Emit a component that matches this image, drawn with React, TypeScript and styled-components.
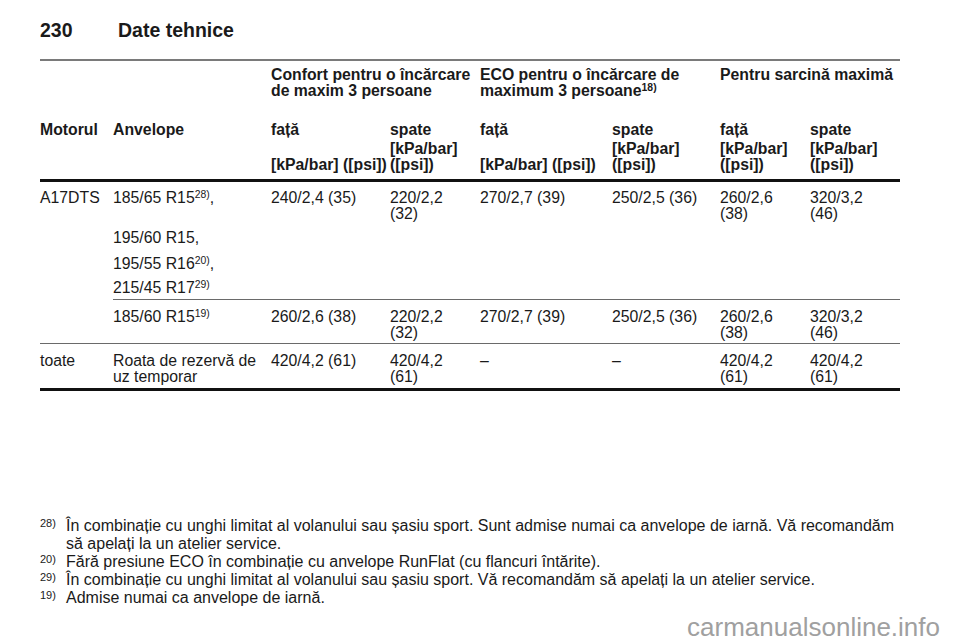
import React from 'react'
import styled, { createGlobalStyle } from 'styled-components'

const GlobalStyle = createGlobalStyle`
  html, body {
    margin: 0;
    padding: 0;
    background: #fff;
  }
  body {
    font-family: "Liberation Sans", Arial, sans-serif;
    color: #1a1a1a;
  }
`

const Page = styled.div`
  width: 960px;
  height: 642px;
  position: relative;
  overflow: hidden;
  display: flex;
  flex-direction: column;
  padding: 0 60px 0 40px;
  box-sizing: border-box;
`

const Header = styled.header`
  display: flex;
  align-items: baseline;
  padding-top: 19px;
  height: 61px;
  border-bottom: 2px solid #7a7a7a;
  box-sizing: border-box;
  font-size: 19.5px;
  font-weight: 700;
`

const PageNo = styled.span`
  width: 78px;
`

const Table = styled.table`
  width: 860px;
  border-collapse: collapse;
  table-layout: fixed;
  font-size: 15.8px;
  line-height: 16px;
`

const HeadCell = styled.th<{ $pt?: number; $pb?: number; $bottom?: boolean; $nowrap?: boolean }>`
  text-align: left;
  vertical-align: ${({ $bottom }) => ($bottom ? 'bottom' : 'top')};
  font-weight: 700;
  white-space: ${({ $nowrap }) => ($nowrap ? 'nowrap' : 'normal')};
  padding: ${({ $pt = 0 }) => $pt}px 6px ${({ $pb = 0 }) => $pb}px 0;
`

const UnitsRow = styled.tr`
  border-bottom: 3px solid #111;
`

const Cell = styled.td<{ $pt?: number; $pb?: number }>`
  vertical-align: top;
  padding: ${({ $pt = 0 }) => $pt}px 6px ${({ $pb = 0 }) => $pb}px 0;
`

const Row = styled.tr<{ $rule: 'thin' | 'thick' }>`
  border-bottom: ${({ $rule }) => ($rule === 'thick' ? '3px solid #111' : '1.5px solid #6a6a6a')};
`

const SubRow = styled.tr``

const TyreCell = styled.td<{ $pt?: number; $pb?: number }>`
  vertical-align: top;
  padding: ${({ $pt = 0 }) => $pt}px 6px ${({ $pb = 0 }) => $pb}px 0;
  border-bottom: 1.5px solid #6a6a6a;
`

const TyreLine = styled.div<{ $gap: number }>`
  margin-bottom: ${({ $gap }) => $gap}px;
`

const Sup = styled.sup`
  font-size: 0.66em;
  line-height: 0;
  vertical-align: 0.45em;
`

const Notes = styled.div`
  margin-top: auto;
  margin-bottom: 35px;
  font-size: 16px;
  line-height: 18px;
  display: flex;
  flex-direction: column;
`

const Note = styled.div`
  display: grid;
  grid-template-columns: 26px 1fr;
`

const NoteMark = styled.span`
  font-size: 11px;
  line-height: 12px;
`

const Watermark = styled.div`
  position: absolute;
  right: 20px;
  bottom: 0;
  font-size: 26px;
  line-height: 30px;
  color: #a0a0a0;
`

const notes = [
  {
    id: '28)',
    text: 'În combinație cu unghi limitat al volanului sau șasiu sport. Sunt admise numai ca anvelope de iarnă. Vă recomandăm să apelați la un atelier service.',
  },
  { id: '20)', text: 'Fără presiune ECO în combinație cu anvelope RunFlat (cu flancuri întărite).' },
  { id: '29)', text: 'În combinație cu unghi limitat al volanului sau șasiu sport. Vă recomandăm să apelați la un atelier service.' },
  { id: '19)', text: 'Admise numai ca anvelope de iarnă.' },
]

const units = [true, false, true, false, false, false]

export default function App() {
  return (
    <>
      <GlobalStyle />
      <Page>
        <Header>
          <PageNo>230</PageNo>
          <span>Date tehnice</span>
        </Header>
        <Table>
          <colgroup>
            <col style={{ width: 73 }} />
            <col style={{ width: 158 }} />
            <col style={{ width: 119 }} />
            <col style={{ width: 90 }} />
            <col style={{ width: 132 }} />
            <col style={{ width: 108 }} />
            <col style={{ width: 90 }} />
            <col style={{ width: 90 }} />
          </colgroup>
          <thead>
            <tr>
              <HeadCell $pt={6} />
              <HeadCell $pt={6} />
              <HeadCell $pt={6} colSpan={2}>
                Confort pentru o încărcare de maxim 3 persoane
              </HeadCell>
              <HeadCell $pt={6} colSpan={2}>
                ECO pentru o încărcare de maximum 3 persoane<Sup>18)</Sup>
              </HeadCell>
              <HeadCell $pt={6} colSpan={2}>
                Pentru sarcină maximă
              </HeadCell>
            </tr>
            <tr>
              <HeadCell $pt={23}>Motorul</HeadCell>
              <HeadCell $pt={23}>Anvelope</HeadCell>
              <HeadCell $pt={23}>față</HeadCell>
              <HeadCell $pt={23}>spate</HeadCell>
              <HeadCell $pt={23}>față</HeadCell>
              <HeadCell $pt={23}>spate</HeadCell>
              <HeadCell $pt={23}>față</HeadCell>
              <HeadCell $pt={23}>spate</HeadCell>
            </tr>
            <UnitsRow>
              <HeadCell $pt={3} $pb={6} />
              <HeadCell $pt={3} $pb={6} />
              {units.map((oneLine, i) => (
                <HeadCell key={i} $pt={3} $pb={6} $bottom $nowrap={oneLine}>
                  [kPa/bar] ([psi])
                </HeadCell>
              ))}
            </UnitsRow>
          </thead>
          <tbody>
            <SubRow>
              <Cell $pt={8} rowSpan={2}>
                A17DTS
              </Cell>
              <TyreCell $pt={8} $pb={3}>
                <TyreLine $gap={24}>
                  185/65 R15<Sup>28)</Sup>,
                </TyreLine>
                <TyreLine $gap={10}>195/60 R15,</TyreLine>
                <TyreLine $gap={8}>
                  195/55 R16<Sup>20)</Sup>,
                </TyreLine>
                <TyreLine $gap={0}>
                  215/45 R17<Sup>29)</Sup>
                </TyreLine>
              </TyreCell>
              <TyreCell $pt={8}>240/2,4 (35)</TyreCell>
              <TyreCell $pt={8}>220/2,2 (32)</TyreCell>
              <TyreCell $pt={8}>270/2,7 (39)</TyreCell>
              <TyreCell $pt={8}>250/2,5 (36)</TyreCell>
              <TyreCell $pt={8}>260/2,6 (38)</TyreCell>
              <TyreCell $pt={8}>320/3,2 (46)</TyreCell>
            </SubRow>
            <Row $rule="thin">
              <Cell $pt={9} $pb={2}>
                185/60 R15<Sup>19)</Sup>
              </Cell>
              <Cell $pt={9} $pb={2}>260/2,6 (38)</Cell>
              <Cell $pt={9} $pb={2}>220/2,2 (32)</Cell>
              <Cell $pt={9} $pb={2}>270/2,7 (39)</Cell>
              <Cell $pt={9} $pb={2}>250/2,5 (36)</Cell>
              <Cell $pt={9} $pb={2}>260/2,6 (38)</Cell>
              <Cell $pt={9} $pb={2}>320/3,2 (46)</Cell>
            </Row>
            <Row $rule="thick">
              <Cell $pt={9} $pb={3}>toate</Cell>
              <Cell $pt={9} $pb={3}>Roata de rezervă de uz temporar</Cell>
              <Cell $pt={9} $pb={3}>420/4,2 (61)</Cell>
              <Cell $pt={9} $pb={3}>420/4,2 (61)</Cell>
              <Cell $pt={9} $pb={3}>–</Cell>
              <Cell $pt={9} $pb={3}>–</Cell>
              <Cell $pt={9} $pb={3}>420/4,2 (61)</Cell>
              <Cell $pt={9} $pb={3}>420/4,2 (61)</Cell>
            </Row>
          </tbody>
        </Table>
        <Notes>
          {notes.map(({ id, text }) => (
            <Note key={id}>
              <NoteMark>{id}</NoteMark>
              <span>{text}</span>
            </Note>
          ))}
        </Notes>
        <Watermark>carmanualsonline.info</Watermark>
      </Page>
    </>
  )
}
